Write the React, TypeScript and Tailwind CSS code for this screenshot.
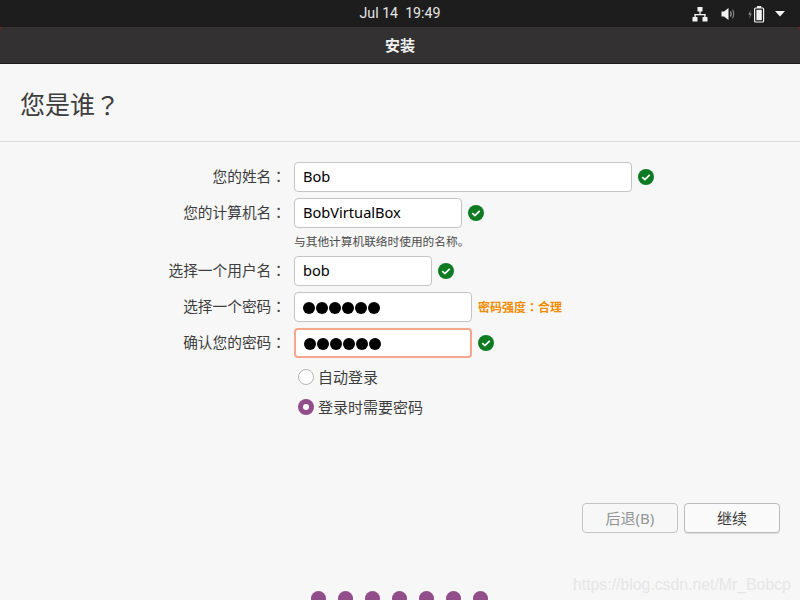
import React from "react";

const CJK = "font-['Noto_Sans','Noto_Sans_CJK_SC',sans-serif]";
// TC cut centres the full-width colon and question mark like the reference
const PUNCT = "font-['Noto_Sans_CJK_TC',sans-serif]";

function CheckBadge() {
	return (
		<svg width="16" height="16" viewBox="0 0 16 16" className="shrink-0">
			<circle cx="8" cy="8" r="8" fill="#0e7a22" />
			<path d="M4.3 8.2 L6.9 10.6 L11.7 5.9" fill="none" stroke="#fff" strokeWidth="1.7" />
		</svg>
	);
}

function Dots() {
	return (
		<span className="flex gap-[1px] mt-[3px]">
			{[0, 1, 2, 3, 4, 5].map((i) => (
				<span key={i} className="w-[12px] h-[12px] rounded-full bg-black" />
			))}
		</span>
	);
}

type RowProps = {
	label: string;
	width: string;
	focused?: boolean;
	children: React.ReactNode;
	after?: React.ReactNode;
};

function Row({ label, width, focused, children, after }: RowProps) {
	return (
		<div className="flex items-center h-[30px]">
			<div className="w-[286px] pb-[1px] text-right text-[14.7px] text-[#3d3d3d]">
				{label}
				<span className={PUNCT}>：</span>
			</div>
			<div
				className={`ml-[8px] h-[30px] pb-[1px] ${width} flex items-center pl-[8px] rounded-[4px] bg-white text-[14.6px] text-black ${
					focused ? "border-2 border-[#f4a78d] pl-[7px]" : "border border-[#c4c4c4]"
				}`}
			>
				{children}
			</div>
			<div className="ml-[6px] flex items-center">{after}</div>
		</div>
	);
}

export default function App() {
	return (
		<div className={`w-[800px] h-[600px] overflow-hidden flex flex-col bg-[#f7f7f7] ${CJK}`}>
			{/* top panel */}
			<div className="relative h-[27px] shrink-0 bg-[#1d1d1d] flex items-center justify-center text-[14.2px] text-[#e6e6e6]">
				<span className="font-['Roboto',sans-serif] whitespace-pre">Jul 14  19:49</span>
				<div className="absolute right-[15px] top-0 h-[27px] flex items-center">
					<svg width="16" height="16" viewBox="0 0 16 16" fill="#f2f2f2" className="mr-[13px]">
						<rect x="5.5" y="1" width="5" height="4.5" />
						<rect x="7.4" y="5" width="1.3" height="3.5" />
						<rect x="2.5" y="8" width="11" height="1.3" />
						<rect x="2.5" y="8" width="1.3" height="3.5" />
						<rect x="12.2" y="8" width="1.3" height="3.5" />
						<rect x="0.5" y="11" width="5" height="4.5" />
						<rect x="10.5" y="11" width="5" height="4.5" />
					</svg>
					<svg width="14" height="16" viewBox="0 0 14 16" className="mr-[12px]">
						<path d="M0.5 5.5 H3 L7.5 2 V14 L3 10.5 H0.5 Z" fill="#f2f2f2" />
						<path d="M9.5 5.5 Q11 8 9.5 10.5" fill="none" stroke="#bdbdbd" strokeWidth="1.1" />
						<path d="M11.5 3.8 Q14 8 11.5 12.2" fill="none" stroke="#8a8a8a" strokeWidth="1.1" />
					</svg>
					<svg width="18" height="18" viewBox="0 0 18 18" className="mr-[10px]">
						<path d="M3.6 5 L1.2 9.8 H3 L2.2 13.8 L4.8 8.5 H3.2 Z" fill="#8a8a8a" />
						<rect x="7.6" y="3" width="9" height="14" rx="1" fill="none" stroke="#f2f2f2" strokeWidth="1.2" />
						<rect x="10" y="1" width="4.2" height="2" fill="#f2f2f2" />
						<rect x="9.4" y="4.8" width="5.4" height="10.4" fill="#f2f2f2" />
					</svg>
					<svg width="10" height="6" viewBox="0 0 10 6">
						<path d="M0 0 H10 L5 5.5 Z" fill="#f2f2f2" />
					</svg>
				</div>
			</div>

			{/* window title */}
			<div className="h-[37px] shrink-0 bg-[#7a1f1f]">
				<div className="h-[37px] pt-[1px] rounded-t-[4px] bg-[#333132] border-b border-[#1f1e1f] flex items-center justify-center text-[15px] font-bold text-[#f2f2f2]">
					安装
				</div>
			</div>

			{/* header */}
			<div className="h-[78px] shrink-0 pl-[20px] pt-[5px] flex items-center border-b border-[#dcdcdc] text-[25px] text-[#3d3d3d]">
				您是谁<span className={PUNCT}>？</span>
			</div>

			{/* form */}
			<div className="flex-1 flex flex-col pt-[20px] min-h-0">
				<div className="flex flex-col gap-[6px]">
					<Row label="您的姓名" width="w-[338px]" after={<CheckBadge />}>
						Bob
					</Row>
					<div>
						<Row label="您的计算机名" width="w-[168px]" after={<CheckBadge />}>
							BobVirtualBox
						</Row>
						<div className="ml-[294px] mt-[6px] h-[15px] text-[11.7px] leading-[15px] text-[#4a4a4a]">
							与其他计算机联络时使用的名称。
						</div>
						<div className="h-[1px]" />
					</div>
					<Row label="选择一个用户名" width="w-[138px]" after={<CheckBadge />}>
						bob
					</Row>
					<Row
						label="选择一个密码"
						width="w-[178px]"
						after={
							<span className="text-[12px] font-bold text-[#f08c00]">
								密码强度<span className={PUNCT}>：</span>合理
							</span>
						}
					>
						<Dots />
					</Row>
					<Row label="确认您的密码" width="w-[178px]" focused after={<CheckBadge />}>
						<Dots />
					</Row>
				</div>

				<div className="ml-[298px] mt-[4px] flex flex-col gap-[14px] text-[15px] text-[#3d3d3d]">
					<div className="flex items-center h-[16px] mt-[7px]">
						<span className="w-[16px] h-[16px] rounded-full border border-[#b5b5b5] bg-white" />
						<span className="ml-[4px]">自动登录</span>
					</div>
					<div className="flex items-center h-[16px]">
						<span className="w-[16px] h-[16px] rounded-full bg-[#924d8b] flex items-center justify-center">
							<span className="w-[6px] h-[6px] rounded-full bg-white" />
						</span>
						<span className="ml-[4px]">登录时需要密码</span>
					</div>
				</div>

				{/* buttons */}
				<div className="mt-auto flex justify-end gap-[6px] pr-[20px]">
					<div className="w-[96px] h-[30px] rounded-[4px] border border-[#c4c4c4] bg-[#f7f7f7] flex items-center justify-center text-[15px] text-[#929595]">
						后退(B)
					</div>
					<div className="w-[96px] h-[30px] rounded-[4px] border border-[#bcbcbc] bg-[#fafafa] shadow-[0_1px_1px_rgba(0,0,0,0.1)] flex items-center justify-center text-[15px] text-[#3d3d3d]">
						继续
					</div>
				</div>

				{/* progress dots, cut off by the window edge */}
				<div className="mt-[58px] h-[9px] shrink-0 overflow-hidden flex gap-[12px] pl-[311px]">
					{[0, 1, 2, 3, 4, 5, 6].map((i) => (
						<span key={i} className="w-[15px] h-[15px] shrink-0 rounded-full bg-[#924d8b]" />
					))}
				</div>
			</div>

			{/* csdn watermark */}
			<div className="absolute left-[573px] top-[573px] text-[15.8px] font-['Liberation_Sans',sans-serif] text-[#e6e6e6]">
				https://blog.csdn.net/Mr_Bobcp
			</div>
		</div>
	);
}
